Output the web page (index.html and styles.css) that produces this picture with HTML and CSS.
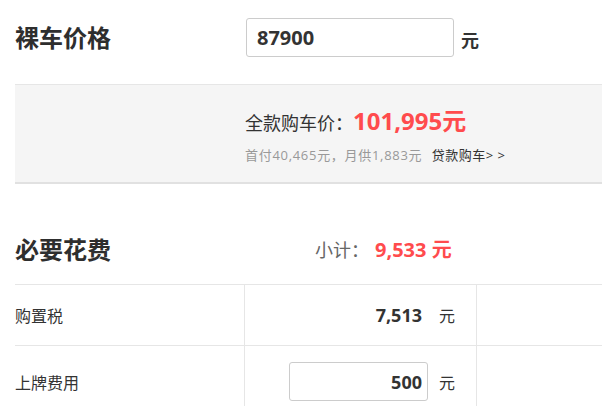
FILE: index.html
```html
<!DOCTYPE html>
<html lang="zh-CN">
<head>
<meta charset="utf-8">
<title>购车计算</title>
<link rel="stylesheet" href="styles.css">
</head>
<body>
<div class="page">
  <div class="price-row">
    <div class="title">裸车价格</div>
    <div class="price-input-wrap">
      <input class="price-input" type="text" value="87900">
      <span class="unit-bold">元</span>
    </div>
  </div>

  <div class="total-box">
    <div class="total-line">
      <span class="total-label">全款购车价：</span><span class="total-value">101,995元</span>
    </div>
    <div class="loan-line">
      <span class="loan-info">首付40,465元，月供1,883元</span>
      <a class="loan-link" href="#">贷款购车&gt; &gt;</a>
    </div>
  </div>

  <div class="fees-head">
    <div class="title title-fees">必要花费</div>
    <div class="subtotal">
      <span class="subtotal-label">小计：</span><span class="subtotal-value">9,533 元</span>
    </div>
  </div>

  <div class="fees-table">
    <div class="fee-row">
      <div class="cell cell-label">购置税</div>
      <div class="cell cell-value">
        <span class="value-text">7,513</span>
        <span class="unit">元</span>
      </div>
      <div class="cell cell-extra"></div>
    </div>
    <div class="fee-row fee-row-input">
      <div class="cell cell-label">上牌费用</div>
      <div class="cell cell-value">
        <input class="fee-input" type="text" value="500">
        <span class="unit">元</span>
      </div>
      <div class="cell cell-extra"></div>
    </div>
  </div>
</div>
</body>
</html>
```

FILE: styles.css
```css
html, body {
  margin: 0;
  padding: 0;
  background: #ffffff;
}

body {
  font-family: "Open Sans", "Noto Sans CJK SC", sans-serif;
  color: #333333;
  overflow: hidden;
}

.page {
  padding-left: 15px;
  width: 587px;
  overflow: hidden;
}

.price-row {
  display: flex;
  align-items: center;
  height: 84px;
  padding-bottom: 9px;
  box-sizing: border-box;
}

.title {
  width: 231px;
  flex: none;
  font-size: 24px;
  line-height: 30px;
  font-weight: 700;
  color: #2e2e2e;
}

.price-input-wrap {
  display: flex;
  align-items: center;
}

.price-input {
  width: 208px;
  height: 39px;
  box-sizing: border-box;
  border: 1px solid #cccccc;
  border-radius: 3px;
  padding: 0 10px;
  font-family: "Open Sans", "Noto Sans CJK SC", sans-serif;
  font-size: 20px;
  font-weight: 700;
  color: #333333;
  outline: none;
}

.unit-bold {
  margin-left: 7px;
  font-size: 18px;
  font-weight: 700;
  line-height: 24px;
  margin-top: 4px;
}

.total-box {
  border-top: 1px solid #e6e6e6;
  border-bottom: 2px solid #e1e1e1;
  background: #f5f5f5;
  padding: 21px 0 17px 230px;
}

.total-line {
  height: 30px;
  line-height: 30px;
  white-space: nowrap;
}

.total-label {
  font-size: 18px;
  color: #333333;
}

.total-value {
  font-size: 24px;
  font-weight: 700;
  color: #ff4b4d;
}

.loan-line {
  margin-top: 9px;
  height: 20px;
  line-height: 20px;
  white-space: nowrap;
  font-size: 13px;
}

.loan-info {
  color: #999999;
  letter-spacing: 0.7px;
}

.loan-link {
  margin-left: 6px;
  color: #333333;
  text-decoration: none;
  letter-spacing: 0.5px;
}

.fees-head {
  display: flex;
  align-items: center;
  height: 40px;
  margin-top: 46px;
  margin-bottom: 14px;
}

.title-fees {
  width: 300px;
}

.subtotal {
  white-space: nowrap;
  line-height: 30px;
}

.subtotal-label {
  font-size: 18px;
  color: #666666;
}

.subtotal-value {
  margin-left: 6px;
  font-size: 20px;
  font-weight: 700;
  color: #ff4b4d;
}

.fees-table {
  border-top: 1px solid #e6e6e6;
}

.fee-row {
  display: grid;
  grid-template-columns: 230px 232px 1fr;
  height: 60px;
  border-bottom: 1px solid #e6e6e6;
}

.fee-row-input {
  height: 71px;
}

.cell {
  display: flex;
  align-items: center;
}

.cell-label {
  border-right: 1px solid #e6e6e6;
  font-size: 16px;
  color: #333333;
}

.cell-value {
  justify-content: flex-end;
  border-right: 1px solid #e6e6e6;
  padding-right: 21px;
}

.value-text {
  font-size: 18px;
  font-weight: 700;
  padding-right: 6px;
  color: #333333;
}

.fee-input {
  width: 139px;
  height: 39px;
  box-sizing: border-box;
  border: 1px solid #cccccc;
  border-radius: 3px;
  padding: 0 5px;
  text-align: right;
  font-family: "Open Sans", "Noto Sans CJK SC", sans-serif;
  font-size: 18px;
  font-weight: 700;
  color: #333333;
  outline: none;
}

.unit {
  margin-left: 11px;
  font-size: 16px;
  color: #333333;
}
```
